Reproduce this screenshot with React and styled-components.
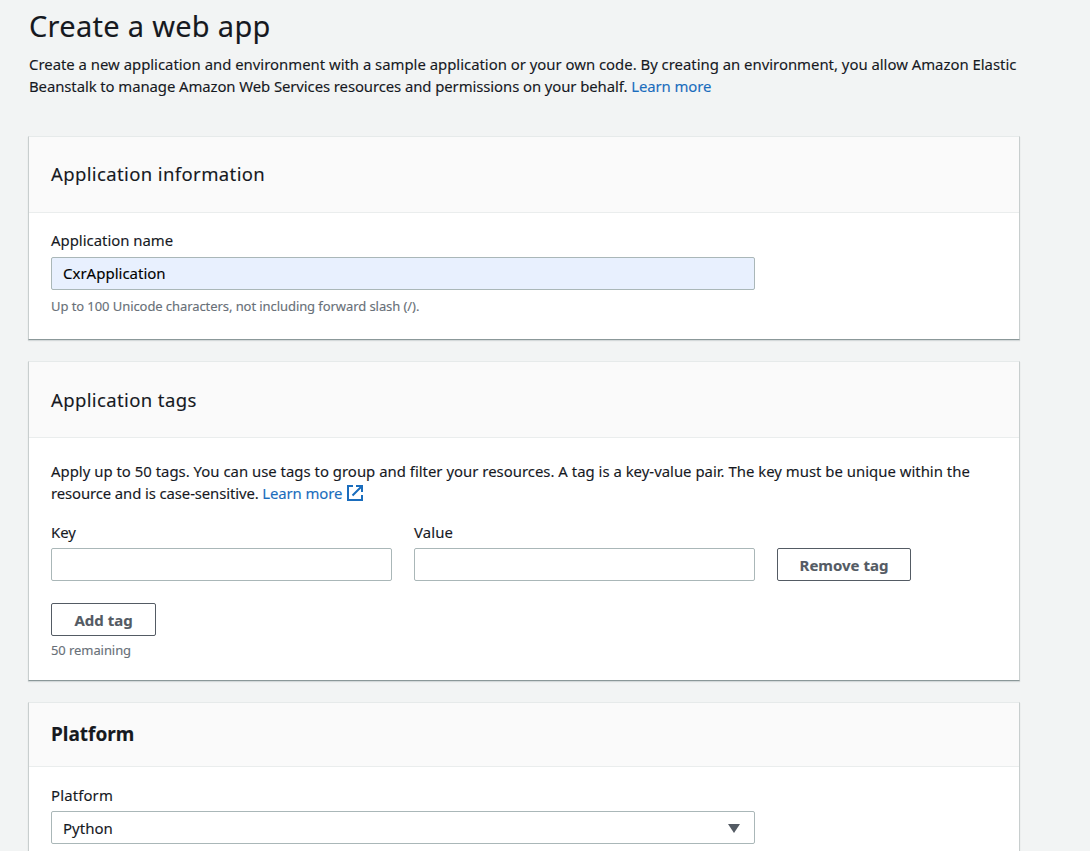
import React from "react";
import styled, { createGlobalStyle } from "styled-components";

const Global = createGlobalStyle`
  * { box-sizing: border-box; }
  body { margin: 0; background: #f2f4f4; overflow: hidden; color: #16191f;
    font: 15px/22px "Noto Sans", sans-serif; -webkit-text-stroke: 0.12px; }
`;
const Page = styled.main`height: 851px; overflow: hidden; padding: 3px 70px 0 28px;`;
const Intro = styled.header`height: 133px; padding-left: 1px;`;
const Title = styled.h1`
  margin: 0 0 5px; font-size: 29px; line-height: 45px; font-weight: 400; letter-spacing: 0.29px;
`;
const Text = styled.p`margin: 0; font-size: 14.9px; line-height: 22px; white-space: nowrap;`;
const Line = styled.span`display: block; letter-spacing: ${(p) => p.$track || 0}px;`;
const Link = styled.a`color: #1a6dbd;`;
const Card = styled.section`
  width: 992px; height: ${(p) => p.$h}px; margin-bottom: 21px; background: #fff;
  border: 1px solid #c8cece; border-top-color: #e6eaea; border-bottom-color: #8b9899;
  box-shadow: 0 1px 1px rgba(0, 28, 36, 0.12);
`;
const CardHead = styled.div`
  display: flex; align-items: center; height: ${(p) => p.$h}px; padding: 0 22px ${(p) => p.$lift || 0}px;
  background: #fafafa; border-bottom: 1px solid #eaeded;
`;
const Heading = styled.h2`
  margin: 0; font-size: ${(p) => (p.$w ? 19 : 18.5)}px; line-height: 26px; font-weight: ${(p) => p.$w || 400};
  letter-spacing: ${(p) => (p.$w ? 0 : 0.38)}px;
`;
const Body = styled.div`padding: ${(p) => p.$top}px 22px 0;`;
const Label = styled.label`
  display: block; font-size: 14.9px; line-height: 22px; margin-bottom: ${(p) => p.$gap || 5}px;
  letter-spacing: ${(p) => p.$track || 0}px;
`;
const Input = styled.div`
  display: flex; align-items: center; justify-content: space-between;
  width: ${(p) => p.$w}px; height: 33px; padding: 0 14px ${(p) => p.$lift || 0}px 11px;
  border: 1px solid #aab7b8; border-radius: 2px; background: ${(p) => p.$bg || "#fff"};
  color: ${(p) => (p.$bg ? "#000" : "inherit")};
`;
const Arrow = styled.svg`margin-top: 1px;`;
const Hint = styled.div`
  font-size: 13px; line-height: 20px; color: #687078; margin-top: ${(p) => p.$gap}px; letter-spacing: -0.075px;
`;
const Row = styled.div`display: flex; align-items: flex-end; gap: 22px; margin: 17px 0 22px;`;
const Button = styled.button`
  display: block; width: ${(p) => p.$w}px; height: 33px; padding: 0; border: 1px solid #545b64;
  border-radius: 2px; background: #fff; color: #545b64; font: 700 15px/20px "Noto Sans", sans-serif;
`;
const Icon = styled.svg`display: inline-block; vertical-align: -2px; margin-left: 5px;`;

export default function App() {
  return (
    <Page>
      <Global />
      <Intro>
        <Title>Create a web app</Title>
        <Text>
          <Line $track={-0.01}>Create a new application and environment with a sample application or your own code. By creating an environment, you allow Amazon Elastic</Line>
          <Line $track={-0.085}>Beanstalk to manage Amazon Web Services resources and permissions on your behalf. <Link>Learn more</Link></Line>
        </Text>
      </Intro>
      <Card $h={204}>
        <CardHead $h={76} $lift={1}><Heading>Application information</Heading></CardHead>
        <Body $top={16}>
          <Label $gap={6}>Application name</Label>
          <Input $w={704} $bg="#e8f0fe" $lift={2}>CxrApplication</Input>
          <Hint $gap={6}>Up to 100 Unicode characters, not including forward slash (/).</Hint>
        </Body>
      </Card>
      <Card $h={320}>
        <CardHead $h={76}><Heading>Application tags</Heading></CardHead>
        <Body $top={22}>
          <Text>
            <Line $track={0.008}>Apply up to 50 tags. You can use tags to group and filter your resources. A tag is a key-value pair. The key must be unique within the</Line>
            <Line $track={-0.11}>resource and is case-sensitive. <Link>Learn more<Icon width="16" height="16" viewBox="0 0 16 16" fill="none" stroke="#1a6dbd" strokeWidth="2"><path d="M6 1H1v14h14v-5M9 1h6v6M15 1 5.5 10.5" /></Icon></Link></Line>
          </Text>
          <Row>
            <div><Label>Key</Label><Input $w={341} /></div>
            <div><Label $track={0.1}>Value</Label><Input $w={341} /></div>
            <Button $w={134}>Remove tag</Button>
          </Row>
          <Button $w={105}>Add tag</Button>
          <Hint $gap={4}>50 remaining</Hint>
        </Body>
      </Card>
      <Card $h={240}>
        <CardHead $h={64} $lift={2}><Heading $w={700}>Platform</Heading></CardHead>
        <Body $top={17}>
          <Label $track={0.15}>Platform</Label>
          <Input $w={704}>Python<Arrow width="12" height="9" viewBox="0 0 12 9"><path d="M0 0h12L6 9z" fill="#545b64" /></Arrow></Input>
        </Body>
      </Card>
    </Page>
  );
}
